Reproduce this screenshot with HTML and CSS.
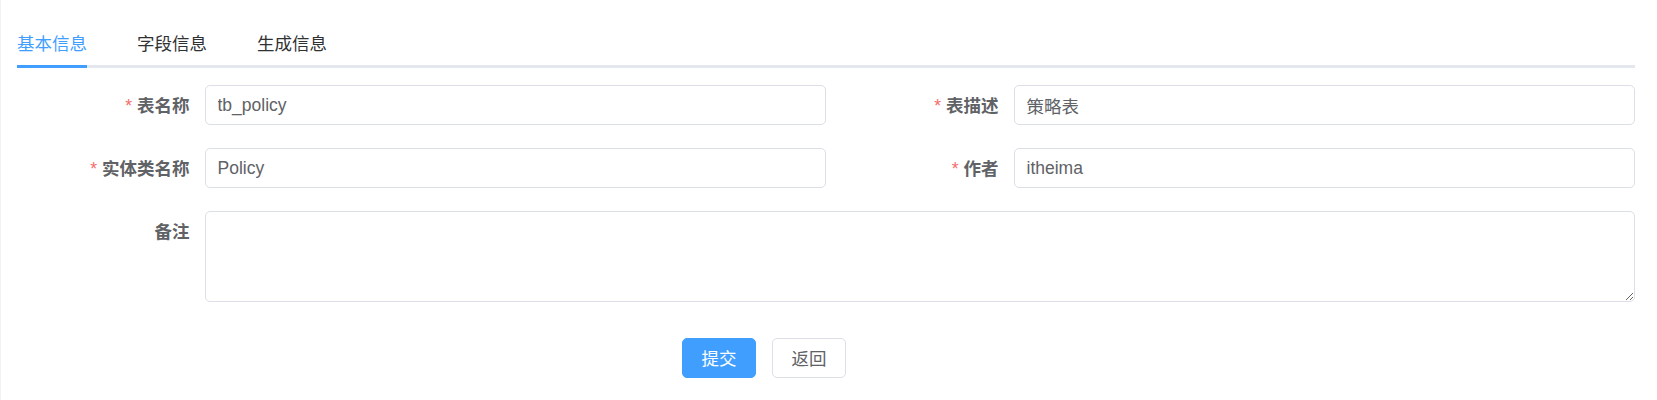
FILE: index.html
```html
<!DOCTYPE html>
<html lang="zh-CN">
<head>
<meta charset="utf-8">
<title>表信息</title>
<link rel="stylesheet" href="styles.css">
</head>
<body>
<div class="page">
  <div class="tabs">
    <div class="tab-list">
      <div class="tab active">基本信息</div>
      <div class="tab">字段信息</div>
      <div class="tab">生成信息</div>
    </div>
  </div>
  <form class="form">
    <div class="row">
      <div class="item">
        <label class="label required">表名称</label>
        <div class="control"><input class="input" type="text" value="tb_policy"></div>
      </div>
      <div class="item">
        <label class="label required">表描述</label>
        <div class="control"><input class="input" type="text" value="策略表"></div>
      </div>
    </div>
    <div class="row">
      <div class="item">
        <label class="label required">实体类名称</label>
        <div class="control"><input class="input" type="text" value="Policy"></div>
      </div>
      <div class="item">
        <label class="label required">作者</label>
        <div class="control"><input class="input" type="text" value="itheima"></div>
      </div>
    </div>
    <div class="row">
      <div class="item full">
        <label class="label">备注</label>
        <div class="control"><textarea class="textarea"></textarea></div>
      </div>
    </div>
    <div class="actions">
      <button type="button" class="btn primary">提交</button>
      <button type="button" class="btn">返回</button>
    </div>
  </form>
</div>
</body>
</html>
```

FILE: styles.css
```css
html, body {
  margin: 0;
  padding: 0;
  background: #ffffff;
}
body {
  font-family: "Liberation Sans", "Noto Sans CJK SC", Arial, sans-serif;
  border-left: 1px solid #f2f2f2;
  min-height: 400px;
  box-sizing: border-box;
}
.page {
  padding: 18px 22px 0 16px;
}
.tabs {
  position: relative;
  margin-bottom: 17px;
}
.tabs::after {
  content: "";
  position: absolute;
  left: 0;
  right: 0;
  bottom: 0;
  height: 3px;
  background: #E4E7ED;
}
.tab-list {
  display: flex;
}
.tab {
  position: relative;
  height: 50px;
  line-height: 50px;
  padding: 0 25px;
  font-size: 17.5px;
  color: #303133;
  font-family: "Noto Sans CJK SC", "Liberation Sans", sans-serif;
  z-index: 1;
}
.tab:first-child { padding-left: 0; }
.tab:last-child { padding-right: 0; }
.tab.active { color: #409EFF; }
.tab.active::after {
  content: "";
  position: absolute;
  left: 0;
  right: 25px;
  bottom: 0;
  height: 3px;
  background: #409EFF;
}
.form {
  display: flex;
  flex-direction: column;
}
.row {
  display: flex;
  margin-bottom: 22px;
}
.item {
  display: flex;
  flex: 1 1 0;
  min-width: 0;
}
.item.full { flex: 1 1 100%; }
.label {
  flex: 0 0 187.5px;
  box-sizing: border-box;
  padding-right: 15px;
  text-align: right;
  line-height: 40px;
  font-size: 17.5px;
  font-weight: bold;
  color: #606266;
  font-family: "Noto Sans CJK SC", "Liberation Sans", sans-serif;
}
.label.required::before {
  content: "*";
  color: #F56C6C;
  margin-right: 5px;
  font-weight: normal;
  font-family: "Liberation Sans", sans-serif;
}
.control {
  flex: 1 1 auto;
  min-width: 0;
  display: flex;
}
.input {
  width: 100%;
  height: 40px;
  box-sizing: border-box;
  border: 1px solid #DCDFE6;
  border-radius: 5px;
  padding: 0 12px;
  font-size: 17.5px;
  color: #606266;
  font-family: "Liberation Sans", "Noto Sans CJK SC", sans-serif;
  outline: none;
  background: #fff;
}
.textarea {
  width: 100%;
  height: 90.5px;
  box-sizing: border-box;
  border: 1px solid #DCDFE6;
  border-radius: 5px;
  padding: 6px 12px;
  font-size: 17.5px;
  color: #606266;
  font-family: "Liberation Sans", "Noto Sans CJK SC", sans-serif;
  resize: vertical;
  outline: none;
  display: block;
}
.actions {
  display: flex;
  gap: 16px;
  margin-top: 14px;
  padding-left: 665px;
}
.btn {
  height: 40px;
  width: 74px;
  box-sizing: border-box;
  border: 1px solid #DCDFE6;
  border-radius: 5px;
  background: #fff;
  color: #606266;
  font-size: 17.5px;
  font-family: "Noto Sans CJK SC", "Liberation Sans", sans-serif;
  padding: 0;
  cursor: pointer;
}
.btn.primary {
  background: #409EFF;
  border-color: #409EFF;
  color: #fff;
}
```
